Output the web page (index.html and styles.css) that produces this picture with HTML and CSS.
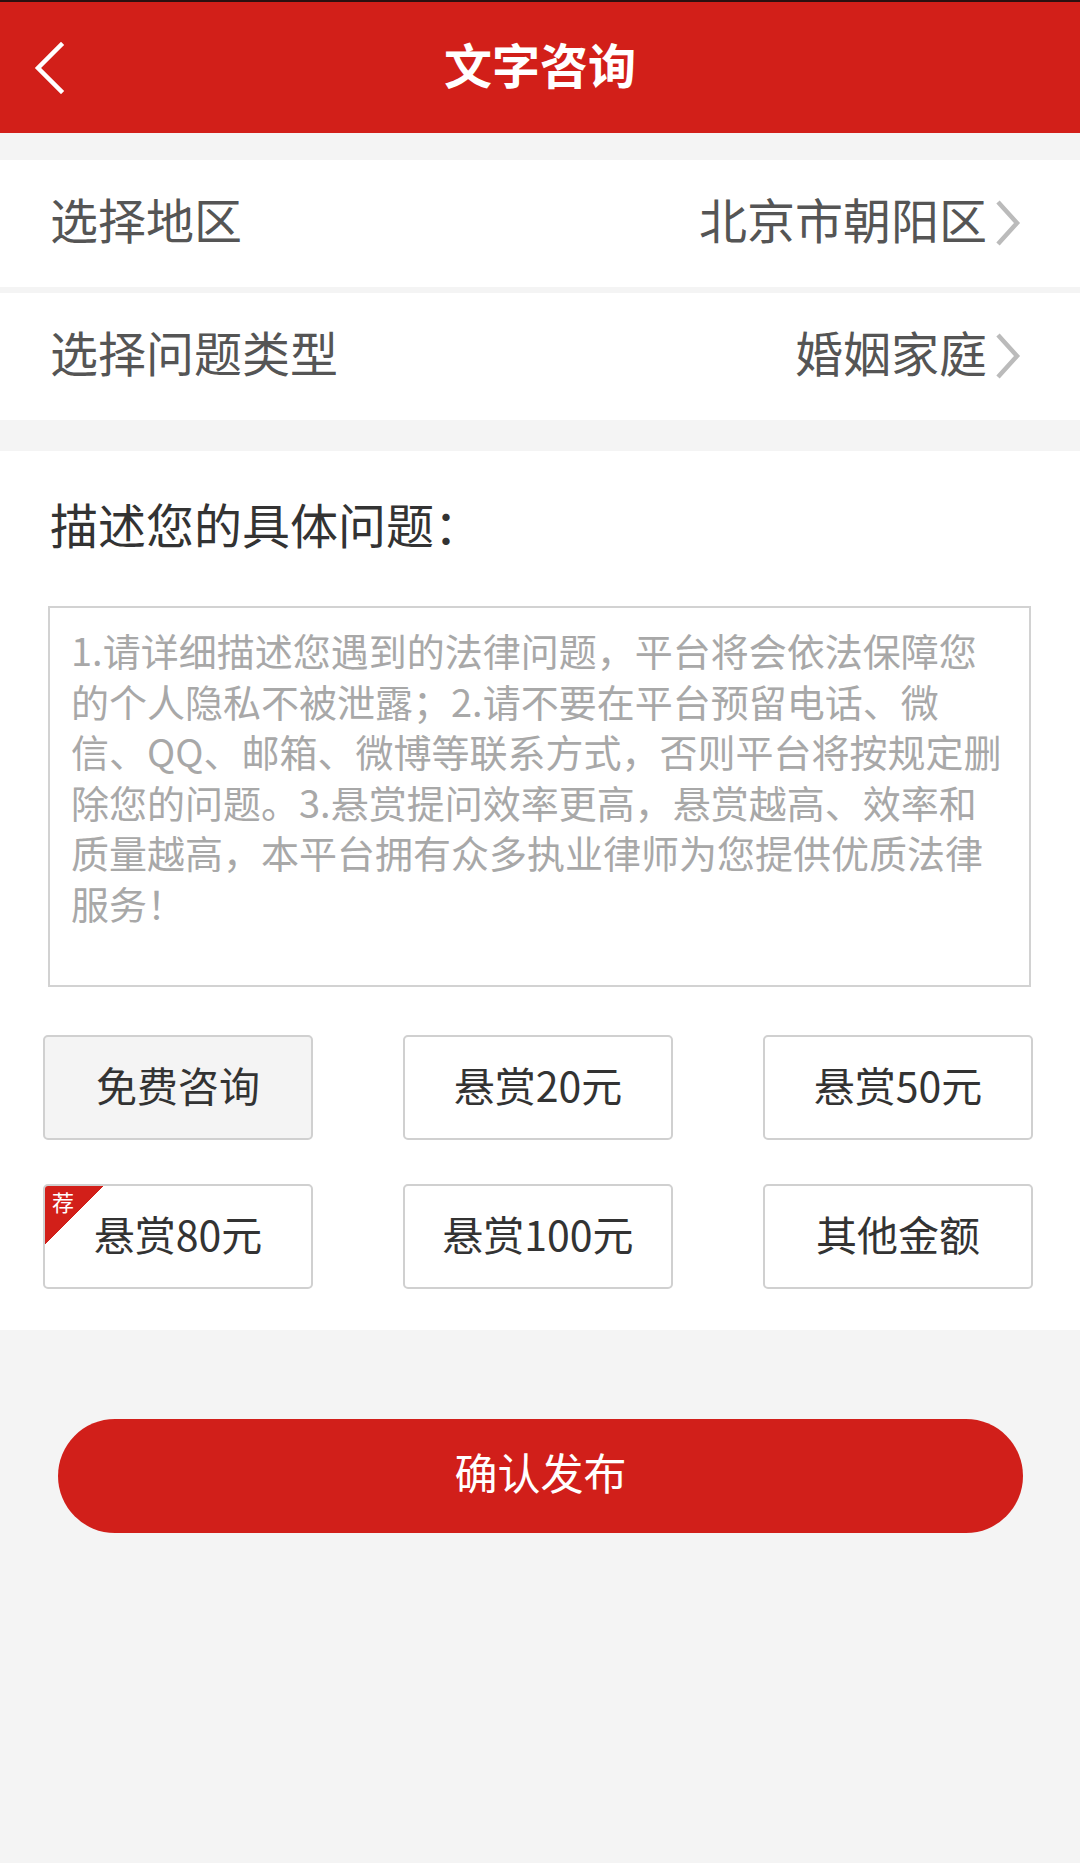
FILE: index.html
```html
<!DOCTYPE html>
<html>

<head>
	<meta charset="utf-8">
	<title>文字咨询</title>
	<link rel="stylesheet" href="styles.css">
</head>

<body>
	<div class="header">
		<button class="back-btn" aria-label="返回">
			<svg width="40" height="56" viewBox="0 0 40 56">
				<polyline points="31,7 8,30 31,53" fill="none" stroke="#fff" stroke-width="4.5" stroke-linecap="square" />
			</svg>
		</button>
		<h1 class="title">文字咨询</h1>
		<div></div>
	</div>

	<div class="select-group">
		<div class="select-row">
			<span class="select-label">选择地区</span>
			<span class="select-value">北京市朝阳区
				<svg class="chevron" width="30" height="48" viewBox="0 0 30 48">
					<polyline points="5,3 24,24 5,45" fill="none" stroke="#bbb" stroke-width="4.5" />
				</svg>
			</span>
		</div>
		<div class="select-row">
			<span class="select-label">选择问题类型</span>
			<span class="select-value">婚姻家庭
				<svg class="chevron" width="30" height="48" viewBox="0 0 30 48">
					<polyline points="5,3 24,24 5,45" fill="none" stroke="#bbb" stroke-width="4.5" />
				</svg>
			</span>
		</div>
	</div>

	<div class="question-section">
		<div class="question-title">描述您的具体问题：</div>
		<div class="question-box">1.请详细描述您遇到的法律问题，平台将会依法保障您的个人隐私不被泄露；2.请不要在平台预留电话、微信、QQ、邮箱、微博等联系方式，否则平台将按规定删除您的问题。3.悬赏提问效率更高，悬赏越高、效率和质量越高，本平台拥有众多执业律师为您提供优质法律服务！</div>

		<div class="reward-grid">
			<button class="reward-btn active">免费咨询</button>
			<button class="reward-btn">悬赏20元</button>
			<button class="reward-btn">悬赏50元</button>
			<button class="reward-btn"><span class="badge">荐</span>悬赏80元</button>
			<button class="reward-btn">悬赏100元</button>
			<button class="reward-btn">其他金额</button>
		</div>
	</div>

	<button class="submit-btn">确认发布</button>
</body>

</html>
```

FILE: styles.css
```css
body {
	margin: 0;
	padding: 0;
	background-color: #f4f4f4;
	font-family: "Noto Sans CJK SC", "Noto Sans", sans-serif;
	min-height: 1863px;
}

button {
	font-family: inherit;
	cursor: pointer;
}

.header {
	height: 131px;
	border-top: 2px solid #2a1010;
	background-color: #d21f19;
	display: grid;
	grid-template-columns: 120px 1fr 120px;
	align-items: center;
}

.back-btn {
	background: none;
	border: none;
	padding: 0 0 0 30px;
	display: flex;
	align-items: center;
	margin-top: -4px;
}

.title {
	margin: 0;
	text-align: center;
	color: #fff;
	font-size: 48px;
	font-weight: bold;
	margin-top: -10px;
}

.select-group {
	margin-top: 27px;
	display: flex;
	flex-direction: column;
	gap: 6px;
}

.select-row {
	background-color: #fff;
	height: 127px;
	box-sizing: border-box;
	display: flex;
	align-items: center;
	justify-content: space-between;
	padding: 0 57px 11px 50px;
	font-size: 48px;
	color: #555;
}

.select-value {
	display: flex;
	align-items: center;
	gap: 6px;
}

.chevron {
	margin-top: 10px;
}

.question-section {
	margin-top: 31px;
	background-color: #fff;
	padding: 42px 0 41px;
}

.question-title {
	font-size: 48px;
	line-height: 60px;
	color: #333;
	padding-left: 50px;
}

.question-box {
	margin: 53px 49px 0 48px;
	height: 343px;
	border: 2px solid #d2d2d2;
	padding: 17px 22px 17px 21px;
	font-size: 38px;
	line-height: 50.6px;
	color: #a8a8a8;
}

.reward-grid {
	margin: 48px 0 0 43px;
	width: 990px;
	display: grid;
	grid-template-columns: repeat(3, 270px);
	column-gap: 90px;
	row-gap: 44px;
}

.reward-btn {
	position: relative;
	height: 105px;
	background-color: #fff;
	border: 2px solid #d0d0d0;
	border-radius: 5px;
	font-size: 41px;
	color: #333;
	padding: 0 0 8px;
	overflow: hidden;
}

.reward-btn.active {
	background-color: #f4f4f4;
}

.badge {
	position: absolute;
	top: 0;
	left: 0;
	width: 59px;
	height: 59px;
	background: linear-gradient(135deg, #d21f19 50%, transparent 50%);
	color: #fff;
	font-size: 22px;
	line-height: 30px;
	text-align: left;
	padding-left: 7px;
	box-sizing: border-box;
}

.submit-btn {
	display: block;
	margin: 89px 57px 0 58px;
	width: 965px;
	height: 114px;
	border: none;
	border-radius: 57px;
	background-color: #d11f1a;
	color: #fff;
	font-size: 43px;
	padding: 0 0 10px;
}
```
